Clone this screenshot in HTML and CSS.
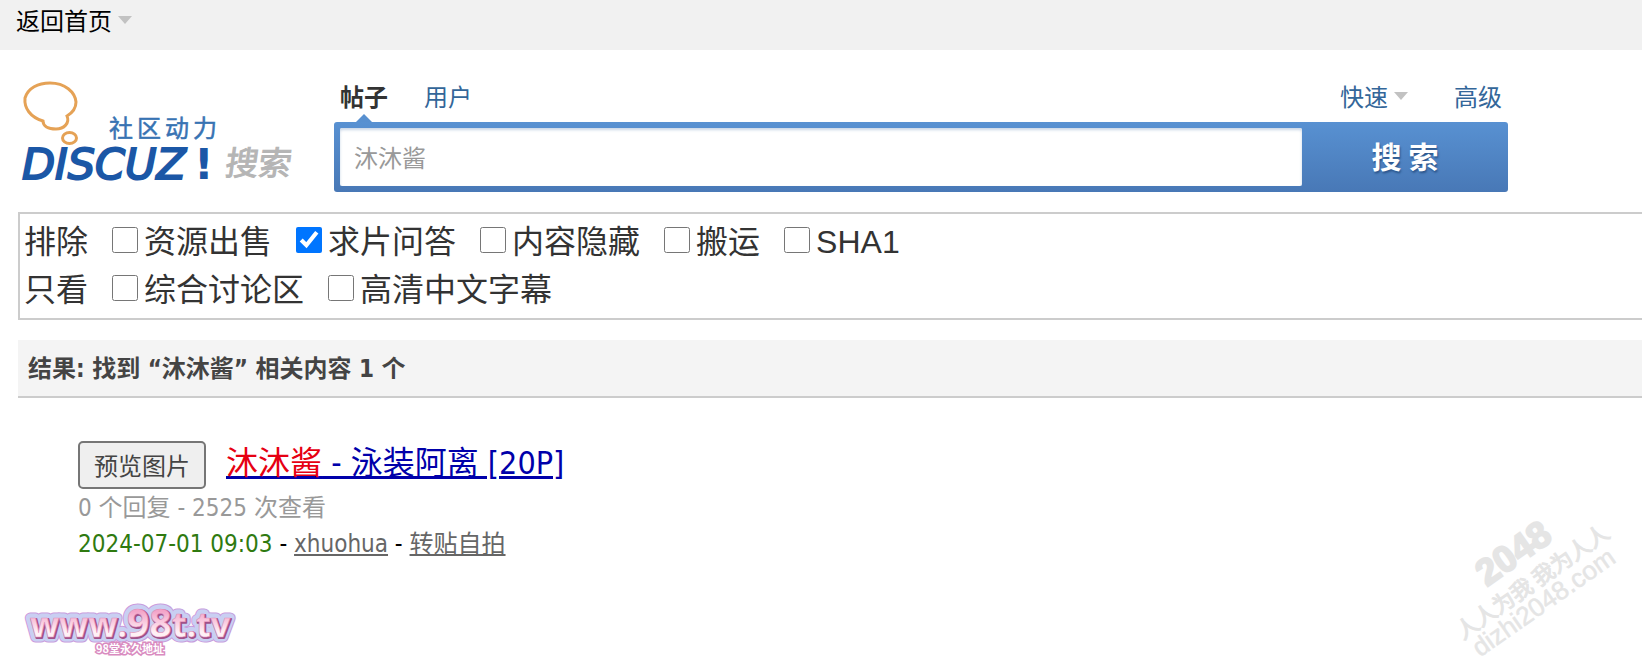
FILE: index.html
```html
<!DOCTYPE html>
<html lang="zh-CN">
<head>
<meta charset="utf-8">
<title>搜索 - 沐沐酱</title>
<link rel="stylesheet" href="styles.css">
</head>
<body>
<nav class="topbar"><a class="home" href="#">返回首页<span class="caret"></span></a></nav>
<main class="page">
  <form class="search">
    <a class="logo" href="#" aria-label="Discuz! 搜索">
      <svg width="280" height="112" viewBox="0 0 280 112">
        <path class="bubble" d="M25 47C12 43 6 34 7 24C10 14 20 9 32 9C47 9 57 18 58 28C58 34 54 39 49 42C52 49 46 55 38 55C30 55 25 52 25 47Z"/>
        <ellipse class="bubble" cx="51.500" cy="64" rx="7" ry="5.500"/>
        <text class="logo-sub" x="91" y="63">社区动力</text>
        <text class="logo-name" x="4" y="105">DISCUZ<tspan class="logo-mark" x="176">!</tspan></text>
        <text class="logo-search" transform="translate(206 101) skewX(-8)">搜索</text>
      </svg>
    </a>
    <div class="search-main">
      <div class="tabs">
        <a class="tab current" href="#">帖子</a>
        <a class="tab" href="#">用户</a>
        <a class="tab quick" href="#">快速<span class="caret"></span></a>
        <a class="tab advanced" href="#">高级</a>
      </div>
      <div class="searchbar">
        <input class="query" type="text" value="沐沐酱" aria-label="关键词">
        <button class="submit" type="button">搜 索</button>
      </div>
    </div>
  </form>

  <section class="filters">
    <div class="filter-row">
      <span>排除</span>
      <label><input type="checkbox">资源出售</label>
      <label><input type="checkbox" checked>求片问答</label>
      <label><input type="checkbox">内容隐藏</label>
      <label><input type="checkbox">搬运</label>
      <label><input type="checkbox">SHA1</label>
    </div>
    <div class="filter-row">
      <span>只看</span>
      <label><input type="checkbox">综合讨论区</label>
      <label><input type="checkbox">高清中文字幕</label>
    </div>
  </section>

  <h2 class="summary">结果: 找到 “<em>沐沐酱</em>” 相关内容 1 个</h2>

  <article class="result">
    <h3 class="result-head">
      <button class="preview" type="button">预览图片</button>
      <a class="title" href="#"><strong>沐沐酱</strong> - 泳装阿离 [20P]</a>
    </h3>
    <p class="stats">0 个回复 - 2525 次查看</p>
    <p class="meta"><span class="date">2024-07-01 09:03</span> - <a href="#">xhuohua</a> - <a href="#">转贴自拍</a></p>
  </article>

  <svg class="site-badge" width="224" height="64" viewBox="0 0 224 64">
    <defs>
      <linearGradient id="pink" x1="0" y1="0" x2="0" y2="1">
        <stop offset="0.3" stop-color="#f3a3c8"/><stop offset="0.7" stop-color="#fff0f5"/>
      </linearGradient>
    </defs>
    <use class="halo-outer" href="#badge-name"/>
    <use class="halo-inner" href="#badge-name"/>
    <use class="shade" href="#badge-name" x="1" y="1"/>
    <g class="face"><text id="badge-name" class="badge-name" x="12" y="39">www.<tspan class="big">98</tspan>t.tv</text></g>
    <text class="badge-sub" x="78" y="55">98堂永久地址</text>
  </svg>
</main>
<svg class="watermark" width="200" height="160" viewBox="0 0 200 160" aria-hidden="true">
  <g transform="translate(26 138) rotate(-35)">
    <text class="wm-number" x="48" y="-36">2048</text>
    <text class="wm-slogan" x="-2" y="-6">人人为我 我为人人</text>
    <text class="wm-domain" x="2" y="18">dizhi2048.com</text>
  </g>
</svg>
</body>
</html>
```
FILE: styles.css
```css
* { box-sizing: border-box; }
body {
  margin: 0;
  position: relative;
  background: #fff;
  color: #000;
  font: 24px/36px "DejaVu Sans Condensed", "Noto Sans CJK SC", sans-serif;
  overflow-x: hidden;
}
a { color: #336699; text-decoration: none; }
.caret {
  display: inline-block;
  margin-left: 6px;
  vertical-align: 6px;
  border: 7px solid transparent;
  border-top: 8px solid #c2c2c2;
  border-bottom: 0;
}
.topbar {
  height: 50px;
  padding: 2px 16px;
  background: #f1f1f1;
  font-family: "Noto Sans CJK SC", sans-serif;
}
.home { color: #000; }
.page { padding-left: 18px; }

.search { display: flex; height: 162px; padding-top: 24px; }
.logo { flex: 0 0 316px; }
.logo svg { display: block; overflow: visible; }
.bubble { fill: none; stroke: #e5a256; stroke-width: 3; }
.logo-sub { font: 24px "Noto Sans CJK SC", sans-serif; letter-spacing: 4px; fill: #3873b3; stroke: #3873b3; stroke-width: 0.5; }
.logo-name { font: italic 43px "DejaVu Sans", sans-serif; fill: #1b57a6; stroke: #1b57a6; stroke-width: 2; }
.logo-mark { font-weight: bold; font-style: normal; stroke-width: 0; }
.logo-search { font: 33px "Noto Sans CJK SC", sans-serif; fill: #b5b5b5; stroke: #b5b5b5; }

.search-main { flex: 1; max-width: 1174px; margin-right: 20px; font-family: "Noto Sans CJK SC", sans-serif; }
.tabs { display: flex; height: 48px; padding: 4px 6px; }
.tab { position: relative; margin-right: 36px; }
.tab.current { color: #333; font-weight: bold; }
.tab.current::after {
  content: "";
  position: absolute;
  left: 16px;
  bottom: -4px;
  border: 8px solid transparent;
  border-bottom-color: #5890d0;
  border-top: 0;
}
.quick { margin-left: auto; margin-right: 46px; }
.advanced { margin-right: 0; }
.searchbar {
  display: flex;
  height: 70px;
  padding: 6px;
  padding-right: 0;
  border-radius: 3px;
  background: linear-gradient(#5891d2, #4878b6);
}
.query {
  flex: 1;
  min-width: 0;
  padding: 0 14px;
  border: 0;
  border-radius: 2px;
  background: #fff;
  box-shadow: inset 0 2px 3px #c9d6e6;
  color: #999;
  font: inherit;
}
.submit {
  width: 206px;
  padding: 0 0 4px;
  border: 0;
  background: none;
  color: #fff;
  font: bold 30px "Noto Sans CJK SC", sans-serif;
  text-shadow: 1px 2px 2px #2d578d;
}

.filters {
  padding: 4px;
  border: 2px solid #ccc;
  border-right: 0;
  color: #333;
  font: 32px/48px "Liberation Sans", "Noto Sans CJK SC", sans-serif;
}
.filter-row { display: flex; gap: 24px; }
.filter-row label { display: flex; }
.filter-row input { width: 26px; height: 26px; margin: 9px 6px 0 0; accent-color: #0075ff; }

.summary {
  margin: 20px 0 0;
  padding: 11px 10px 9px;
  border-bottom: 2px solid #ccc;
  background: #f4f4f4;
  color: #444;
  font-size: 24px;
  line-height: 36px;
}
.summary em { font-style: normal; }

.result { padding: 43px 60px 0; }
.result-head {
  display: flex;
  gap: 20px;
  margin: 0;
  font-size: 32px;
  font-weight: normal;
  line-height: 44px;
}
.preview {
  width: 128px;
  height: 48px;
  padding: 0 0 2px;
  border: 2px solid #767676;
  border-radius: 5px;
  background: #efefef;
  color: #444;
  font: 24px "Noto Sans CJK SC", sans-serif;
}
.title { color: #00a; text-decoration: underline; }
.title strong { color: #e60012; font-weight: normal; }
.stats, .meta { margin: 0; }
.stats { padding-top: 1px; color: #999; }
.meta a { color: #666; text-decoration: underline; }
.date { color: #2f7a10; }

.site-badge { display: block; margin-top: 36px; overflow: visible; }
.badge-name { font: bold 34px "Open Sans", sans-serif; stroke-linejoin: round; }
.badge-name .big { font-size: 39px; }
.halo-outer { fill: #c99bdc; stroke: #c99bdc; stroke-width: 11px; }
.halo-inner { fill: #c9cff2; stroke: #c9cff2; stroke-width: 9px; }
.shade { fill: #a0528a; stroke: #a0528a; stroke-width: 2px; }
.face { fill: url(#pink); stroke: #e593bd; stroke-width: 0.5px; }
.badge-sub {
  font: bold 11px "Noto Sans CJK SC", sans-serif;
  fill: #fff;
  stroke: #d98bc0;
  stroke-width: 3px;
  paint-order: stroke;
}

.watermark { position: absolute; right: 0; top: 506px; fill: #e5e5e5; }
.wm-number { font: bold 37px "Liberation Sans", sans-serif; stroke: #e5e5e5; stroke-width: 2px; }
.wm-slogan { font: 22px "Noto Sans CJK SC", sans-serif; stroke: #e5e5e5; }
.wm-domain { font: 26px "Liberation Sans", sans-serif; stroke: #e5e5e5; stroke-width: 0.5; }
```
